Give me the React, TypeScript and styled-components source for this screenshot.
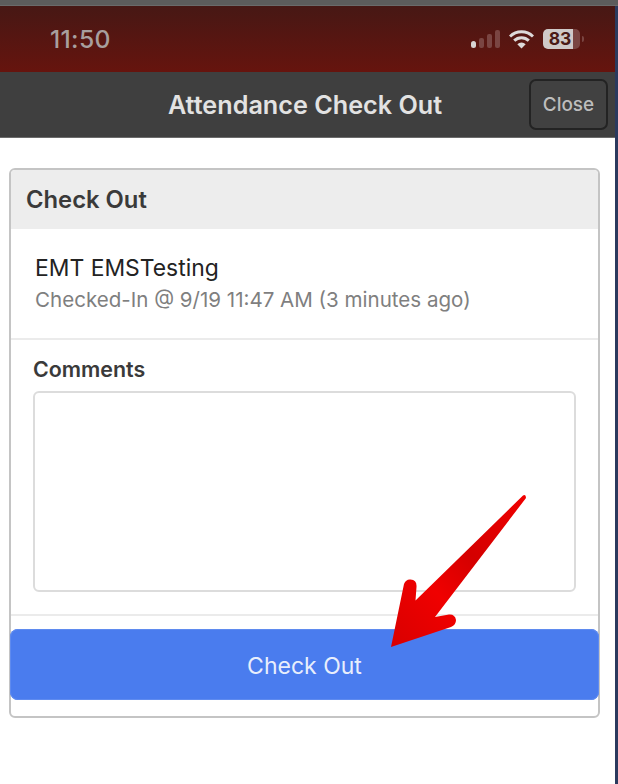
import React from "react";
import styled, { createGlobalStyle } from "styled-components";

const Global = createGlobalStyle`
  html, body { margin: 0; padding: 0; background: #fff; }
  body { font-family: Inter, "Liberation Sans", Arial, sans-serif; }
  * { box-sizing: border-box; }
`;

const Page = styled.div`
  position: relative;
  width: 618px;
  height: 784px;
  overflow: hidden;
  display: flex;
  background: #2b3a5e;
`;

const Screen = styled.div`
  width: 615px;
  height: 784px;
  background: #fff;
  display: flex;
  flex-direction: column;
`;

const TopEdge = styled.div`
  position: absolute;
  top: 0;
  left: 0;
  right: 0;
  height: 6px;
  background: #5c5c5c;
  border-bottom: 1px solid #6a6a6a;
`;

const StatusBar = styled.div`
  height: 72px;
  flex: none;
  padding: 6px 35px 0 50px;
  background: linear-gradient(180deg, #441815 0%, #66140e 100%);
  display: flex;
  align-items: center;
  justify-content: space-between;
`;

const Time = styled.span`
  font-size: 24.7px;
  font-weight: 500;
  color: #a89f9e;
  letter-spacing: 0.3px;
`;

const StatusIcons = styled.div`
  display: flex;
  align-items: center;
  gap: 9px;
`;

const NavBar = styled.div`
  position: relative;
  height: 66px;
  flex: none;
  background: #3f3f3f;
  border-bottom: 1px solid #6b6b6b;
  display: flex;
  align-items: center;
  justify-content: center;
`;

const NavTitle = styled.div`
  font-size: 25.2px;
  font-weight: 600;
  color: #e2e2e2;
  margin-right: 5px;
`;

const CloseButton = styled.button`
  position: absolute;
  left: 529px;
  top: 7px;
  width: 79px;
  height: 51px;
  background: #414141;
  border: 2px solid #232323;
  border-radius: 7px;
  color: #bdbdbd;
  font: 500 18.9px Inter, "Liberation Sans", sans-serif;
  padding: 0;
`;

const Card = styled.section`
  margin: 30px 15px 0 9px;
  height: 550px;
  border: 2px solid #c4c4c4;
  border-radius: 6px;
  display: flex;
  flex-direction: column;
`;

const CardHeader = styled.div`
  height: 59px;
  flex: none;
  background: #ededed;
  border-radius: 4px 4px 0 0;
  padding-left: 15px;
  display: flex;
  align-items: center;
  font-size: 23.8px;
  font-weight: 600;
  color: #3a3a3a;
`;

const PersonRow = styled.div`
  height: 111px;
  flex: none;
  padding: 25px 0 0 24px;
  border-bottom: 2px solid #ebebeb;
`;

const PersonName = styled.div`
  font-size: 22.9px;
  line-height: 28px;
  color: #232323;
`;

const PersonMeta = styled.div`
  font-size: 20.55px;
  line-height: 24px;
  margin-top: 6px;
  color: #7f7f7f;
`;

const CommentsBlock = styled.div`
  height: 276px;
  flex: none;
  padding: 16px 22px 0 22px;
  border-bottom: 2px solid #ebebeb;
`;

const FieldLabel = styled.label`
  display: block;
  font-size: 21.4px;
  line-height: 26px;
  font-weight: 600;
  color: #3a3a3a;
`;

const CommentsInput = styled.div`
  margin-top: 9px;
  height: 201px;
  border: 2px solid #dcdcdc;
  border-radius: 6px;
  background: #fff;
`;

const SubmitButton = styled.button`
  margin: 13px -1px 0 -1px;
  height: 71px;
  flex: none;
  border: none;
  border-radius: 8px;
  padding: 2px 0 0;
  background: #4a7cee;
  color: #e8eefc;
  font: 400 23px Inter, "Liberation Sans", sans-serif;
  box-shadow: inset 0 0 0 1px #5f8bef;
`;

const Arrow = styled.svg`
  position: absolute;
  left: 380px;
  top: 485px;
  pointer-events: none;
`;

const SignalIcon = () => (
  <svg width="29" height="20" viewBox="0 0 29 20">
    <rect x="0" y="12" width="5" height="7" rx="2.5" fill="#d8d4d3" />
    <rect x="8" y="9" width="5" height="10" rx="2" fill="#7a4542" />
    <rect x="16" y="5" width="5" height="14" rx="2" fill="#7a4542" />
    <rect x="24" y="1" width="5" height="18" rx="2" fill="#7a4542" />
  </svg>
);

const WifiIcon = () => (
  <svg width="25" height="19" viewBox="0 0 25 19">
    <path d="M1 6.5a16.5 16.5 0 0 1 23 0" fill="none" stroke="#dedada" strokeWidth="3" />
    <path d="M5.2 10.6a10.5 10.5 0 0 1 14.6 0" fill="none" stroke="#dedada" strokeWidth="3" />
    <path d="M12.5 18.5l-4.2-4.3a6 6 0 0 1 8.4 0z" fill="#dedada" />
  </svg>
);

const BatteryShell = styled.div`
  position: relative;
  width: 37px;
  height: 20px;
  border-radius: 5px;
  background: linear-gradient(90deg, #cfc9c8 0 82%, #7a4542 82% 100%);
  color: #4a1a16;
  font-size: 17.5px;
  font-weight: 700;
  line-height: 20px;
  text-align: center;
  padding-right: 3px;
`;

const BatteryCap = styled.span`
  position: absolute;
  right: -4px;
  top: 7px;
  width: 2px;
  height: 6px;
  border-radius: 0 2px 2px 0;
  background: #7a4542;
`;

export default function App() {
  return (
    <Page>
      <Global />
      <Screen>
        <StatusBar>
          <Time>11:50</Time>
          <StatusIcons>
            <SignalIcon />
            <WifiIcon />
            <BatteryShell>
              83
              <BatteryCap />
            </BatteryShell>
          </StatusIcons>
        </StatusBar>
        <NavBar>
          <NavTitle>Attendance Check Out</NavTitle>
          <CloseButton>Close</CloseButton>
        </NavBar>
        <Card>
          <CardHeader>Check Out</CardHeader>
          <PersonRow>
            <PersonName>EMT EMSTesting</PersonName>
            <PersonMeta>Checked-In @ 9/19 11:47 AM (3 minutes ago)</PersonMeta>
          </PersonRow>
          <CommentsBlock>
            <FieldLabel>Comments</FieldLabel>
            <CommentsInput />
          </CommentsBlock>
          <SubmitButton>Check Out</SubmitButton>
        </Card>
      </Screen>
      <TopEdge />
      <Arrow width="160" height="170" viewBox="380 485 160 170">
        <defs>
          <linearGradient id="arrowFill" x1="0" y1="1" x2="1" y2="0">
            <stop offset="0" stopColor="#d80000" />
            <stop offset="0.35" stopColor="#f00000" />
            <stop offset="0.6" stopColor="#d40000" />
            <stop offset="1" stopColor="#f00000" />
          </linearGradient>
        </defs>
        <path
          d="M391 647 L404 584 Q406 579 410.5 579.5 Q417 580 416.5 587 L415.5 600.5 L523 495.5 Q526 494 526 498 L435 617 L449 614.5 Q455 614 456 620 Q456 625 451 627 Z"
          fill="url(#arrowFill)"
        />
      </Arrow>
    </Page>
  );
}
